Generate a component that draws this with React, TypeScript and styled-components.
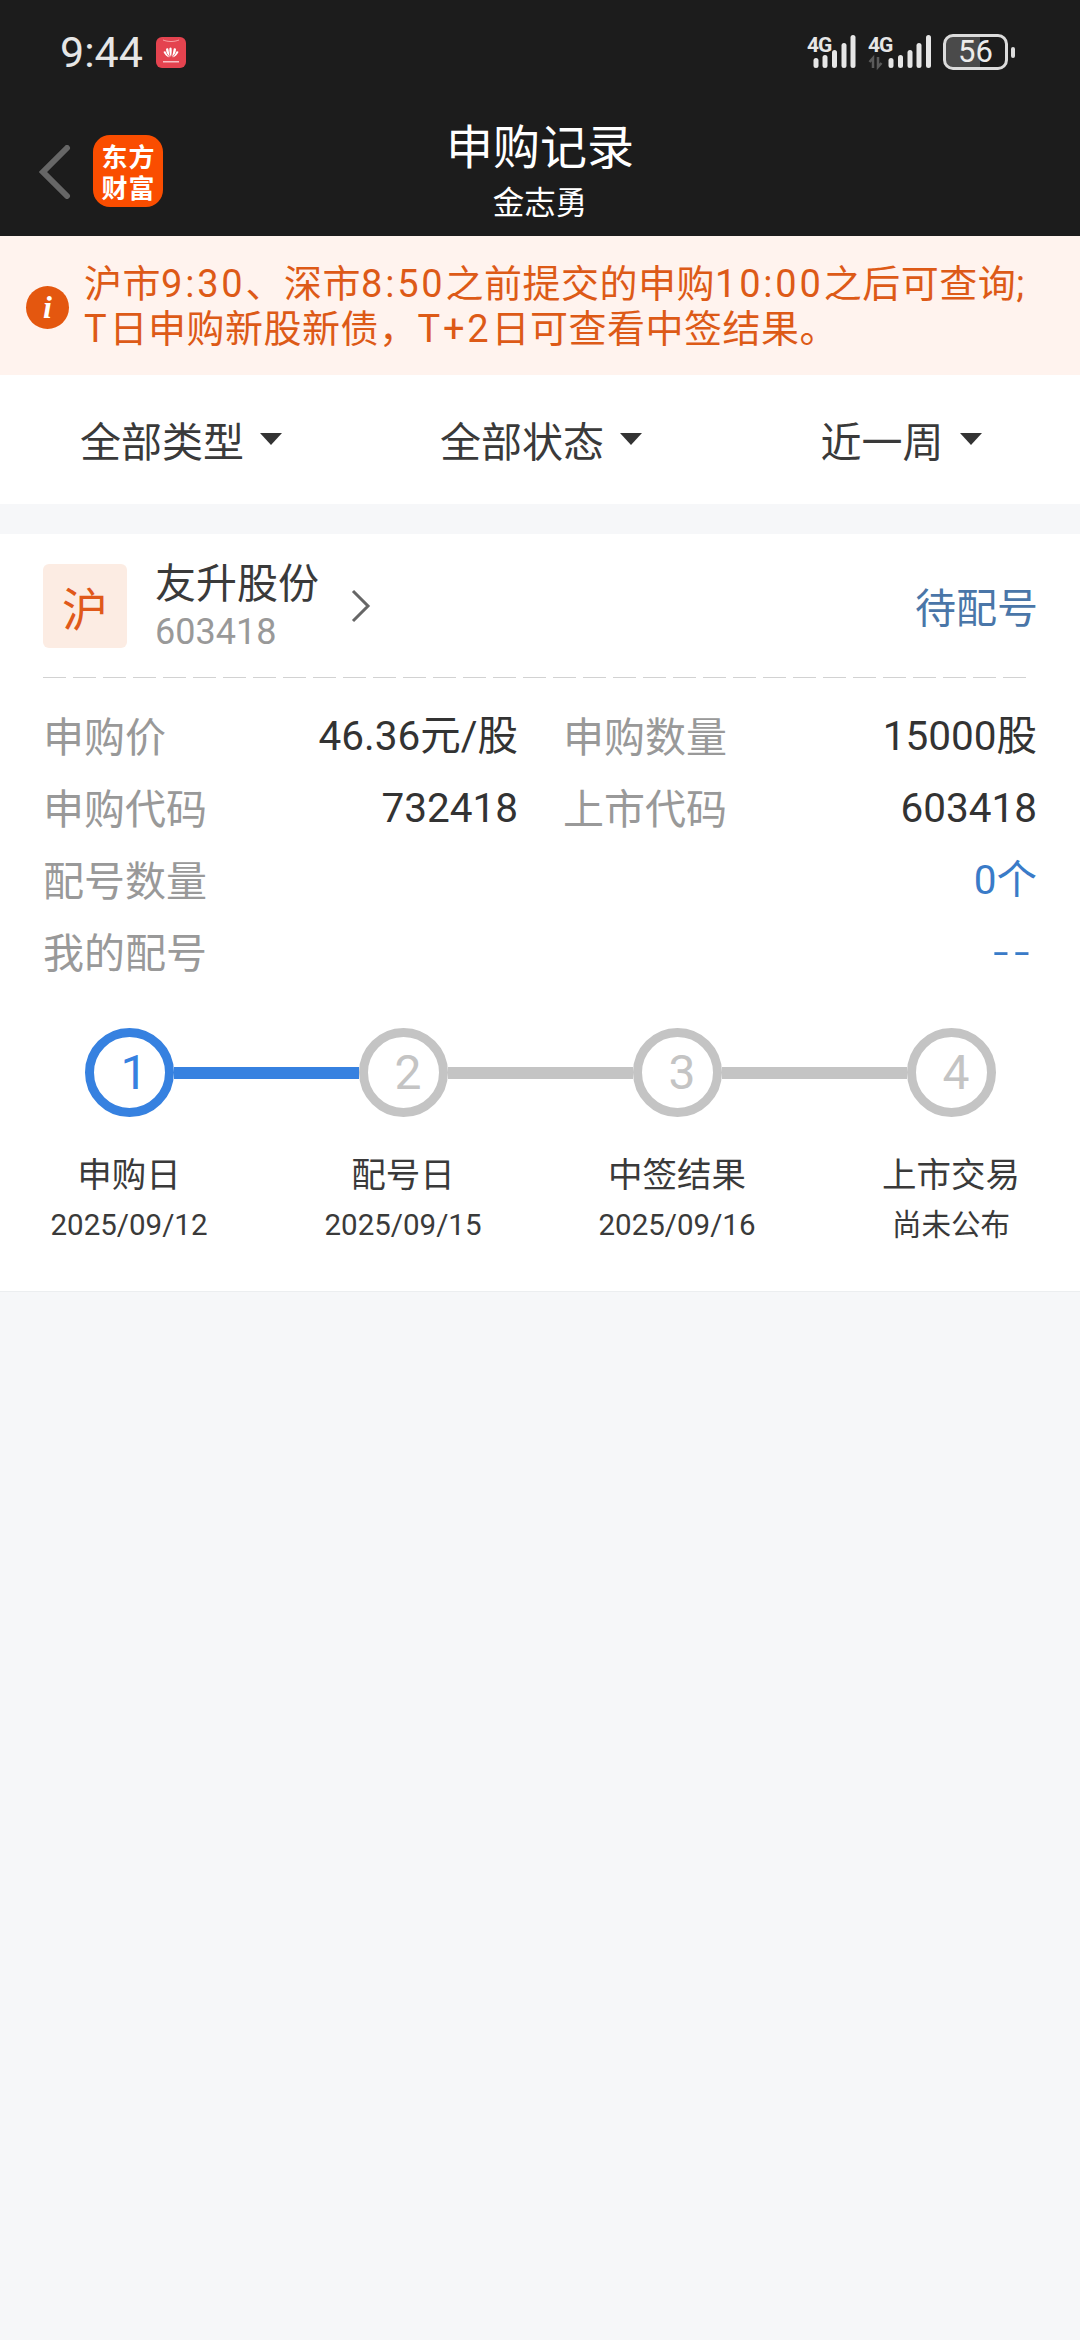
import React from "react";
import styled, { createGlobalStyle } from "styled-components";

const GlobalStyle = createGlobalStyle`
  html, body {
    margin: 0;
    padding: 0;
    background: #f6f7f9;
  }
  body {
    font-family: Roboto, "Noto Sans CJK SC", sans-serif;
  }
`;

const Page = styled.div`
  width: 1080px;
  height: 2340px;
  overflow: hidden;
  background: #f6f7f9;
`;

const Header = styled.header`
  height: 236px;
  background: #1c1c1c;
  display: flex;
  flex-direction: column;
`;

const StatusBar = styled.div`
  height: 100px;
  display: flex;
  align-items: center;
  justify-content: space-between;
  padding: 4px 65px 0 60px;
  box-sizing: border-box;
`;

const StatusLeft = styled.div`
  display: flex;
  align-items: center;
  gap: 13px;
`;

const Time = styled.span`
  color: #e6e6e6;
  font-size: 43px;
  font-family: Roboto, sans-serif;
  line-height: 50px;
`;

const NavBar = styled.div`
  position: relative;
  flex: 1;
  display: flex;
  align-items: center;
  padding: 8px 0 0 39px;
  gap: 22px;
`;

const Logo = styled.div`
  width: 70px;
  height: 72px;
  margin-bottom: 3px;
  background: #fa4d00;
  border-radius: 17px;
  display: grid;
  grid-template-columns: 1fr 1fr;
  place-items: center;
  padding: 5px 8px;
  box-sizing: border-box;
  color: #fff;
  font: 700 26px/31px "Noto Sans CJK SC", sans-serif;
`;

const TitleBlock = styled.div`
  position: absolute;
  left: 240px;
  right: 240px;
  top: 12px;
  text-align: center;
  color: #fff;
  font-family: "Noto Sans CJK SC", sans-serif;
`;

const Title = styled.div`
  font-size: 47px;
  line-height: 64px;
`;

const SubTitle = styled.div`
  font-size: 31.5px;
  line-height: 48px;
`;

const Notice = styled.div`
  height: 139px;
  background: #fff3ee;
  display: flex;
  align-items: center;
  gap: 15px;
  padding: 3px 0 0 26px;
  box-sizing: border-box;
`;

const InfoIcon = styled.div`
  width: 43px;
  height: 43px;
  flex: none;
  border-radius: 50%;
  background: #e4570f;
  color: #fff;
  display: flex;
  align-items: center;
  justify-content: center;
  font: italic 700 32px/43px "Liberation Serif", serif;
`;

const NoticeText = styled.div`
  color: #dd5a17;
  font: 38px/45px Roboto, "Noto Sans CJK SC", sans-serif;
  letter-spacing: 0.5px;
  white-space: nowrap;
`;

const Num = styled.span`
  letter-spacing: 2.8px;
`;

const Filters = styled.div`
  height: 129px;
  background: #fff;
  display: grid;
  grid-template-columns: repeat(3, 360px);
`;

const FilterItem = styled.div`
  display: flex;
  align-items: center;
  justify-content: center;
  gap: 16px;
  padding: 0 0 2px 2px;
  box-sizing: border-box;
  color: #3a3a3a;
  font: 41px/50px "Noto Sans CJK SC", sans-serif;
`;

const Caret = styled.i`
  width: 0;
  height: 0;
  border-left: 11px solid transparent;
  border-right: 11px solid transparent;
  border-top: 12px solid #333;
`;

const Card = styled.section`
  margin-top: 30px;
  height: 758px;
  background: #fff;
  padding: 0 43px 0 43px;
  box-sizing: border-box;
  border-bottom: 1px solid #eceef0;
`;

const StockRow = styled.div`
  height: 144px;
  display: flex;
  align-items: center;
  background-image: repeating-linear-gradient(90deg, #d2d2d2 0 23px, transparent 23px 30px);
  background-size: 986px 2px;
  background-position: 0 143px;
  background-repeat: no-repeat;
  box-sizing: border-box;
`;

const Badge = styled.div`
  width: 84px;
  height: 84px;
  border-radius: 6px;
  background: #fcece3;
  color: #e0591a;
  display: flex;
  align-items: center;
  justify-content: center;
  font: 46px/80px "Noto Sans CJK SC", sans-serif;
`;

const StockText = styled.div`
  margin-left: 28px;
  display: flex;
  flex-direction: column;
`;

const StockName = styled.div`
  color: #3a3a3a;
  font: 41px/52px "Noto Sans CJK SC", sans-serif;
`;

const StockCode = styled.div`
  color: #999;
  font: 36px/52px Roboto, sans-serif;
`;

const Chevron = styled.svg`
  margin-left: 32px;
`;

const Status = styled.div`
  margin: 0 -1px 3px auto;
  color: #4a76a8;
  font: 41px/50px "Noto Sans CJK SC", sans-serif;
`;

const Rows = styled.div`
  padding: 22px 0 0 0;
  display: grid;
  grid-template-columns: 475px 1fr;
  grid-auto-rows: 72px;
  column-gap: 45px;
`;

const Row = styled.div<{ $wide?: boolean }>`
  display: flex;
  align-items: center;
  justify-content: space-between;
  grid-column: ${(p) => (p.$wide ? "1 / -1" : "auto")};
`;

const Label = styled.span`
  color: #999;
  font: 41px/50px "Noto Sans CJK SC", sans-serif;
  margin-bottom: 4px;
`;

const Value = styled.span<{ $blue?: boolean }>`
  color: ${(p) => (p.$blue ? "#3a7bc8" : "#333")};
  font: 40.5px/50px Roboto, "Noto Sans CJK SC", sans-serif;
`;

const Dashes = styled(Value)`
  font-size: 56px;
  font-weight: 300;
  letter-spacing: 5px;
  margin-right: 2px;
`;

const Track = styled.div`
  margin-top: 40px;
  padding-left: 42px;
  display: flex;
  align-items: center;
`;

const Circle = styled.div<{ $on?: boolean }>`
  width: 89px;
  height: 89px;
  flex: none;
  border-radius: 50%;
  border: 9px solid ${(p) => (p.$on ? "#3681e0" : "#c4c4c4")};
  color: ${(p) => (p.$on ? "#3681e0" : "#c4c4c4")};
  box-sizing: border-box;
  display: flex;
  align-items: center;
  justify-content: center;
  font: 400 48px/71px Roboto, sans-serif;
  padding-left: 9px;
`;

const Line = styled.div<{ $on?: boolean }>`
  width: 185px;
  height: 12px;
  background: ${(p) => (p.$on ? "#3681e0" : "#c4c4c4")};
`;

const StepLabels = styled.div`
  margin-top: 30px;
  margin-left: 1px;
  display: grid;
  grid-template-columns: repeat(3, 274px) 170px;
`;

const Step = styled.div`
  width: 170px;
  display: flex;
  flex-direction: column;
  align-items: center;
  white-space: nowrap;
`;

const StepName = styled.div`
  color: #3a3a3a;
  font: 34.5px/50px "Noto Sans CJK SC", sans-serif;
`;

const StepDate = styled.div`
  color: #3a3a3a;
  font: 29.500px/56px Roboto, "Noto Sans CJK SC", sans-serif;
`;

const SignalIcon = ({ width, arrows }: { width: number; arrows?: boolean }) => {
  const xs = arrows ? [23, 32.5, 42, 51, 60.5] : [12, 21, 30.5, 40, 49];
  const hs = [10, 13, 18, 25, 33];
  return (
    <svg width={width} height={40} viewBox={`0 0 ${width} 40`}>
      <text x={arrows ? 0 : 3} y="20" fill="#e6e6e6" fontSize="21" fontWeight="700" letterSpacing="-1" fontFamily="Roboto, sans-serif">
        4G
      </text>
      {xs.map((x, i) => (
        <rect key={i} x={x - 2.5} y={36 - hs[i]} width={5} height={hs[i]} rx={2.5} fill="#e6e6e6" />
      ))}
      {arrows && (
        <path d="M5 36v-10l-3.500 4M10 25v10l3.500-4" stroke="#5a5a5a" strokeWidth="2.500" fill="none" />
      )}
    </svg>
  );
};

const Battery = styled.div`
  width: 65px;
  height: 36px;
  border: 3px solid #dcdcdc;
  border-radius: 10px;
  box-sizing: border-box;
  display: flex;
  align-items: center;
  justify-content: center;
  color: #ececec;
  font: 31px/30px Roboto, sans-serif;
  background: linear-gradient(90deg, #4a4a4a 0 34px, transparent 34px);
`;

const BatteryNub = styled.i`
  width: 4px;
  height: 11px;
  border-radius: 2px;
  background: #dcdcdc;
  margin-left: 3px;
`;

const StatusRight = styled.div`
  display: flex;
  align-items: center;
  gap: 12px;
`;

const BatteryWrap = styled.div`
  display: flex;
  align-items: center;
`;

const steps = [
  { name: "申购日", date: "2025/09/12" },
  { name: "配号日", date: "2025/09/15" },
  { name: "中签结果", date: "2025/09/16" },
  { name: "上市交易", date: "尚未公布" },
];

export default function App() {
  return (
    <Page>
      <GlobalStyle />
      <Header>
        <StatusBar>
          <StatusLeft>
            <Time>9:44</Time>
            <svg width="30" height="31" viewBox="0 0 30 31">
              <rect width="30" height="31" rx="6" fill="#e4434f" />
              <path d="M7 3c5 2 11 2 16 0" stroke="#f7a0a4" strokeWidth="1" fill="none" />
              <g fill="#fff">
                <path d="M15 20c-1.500-3-2-6-1.500-9 .5-.7 1.500-.7 2 0 .6 3 0 6-.5 9z" />
                <path d="M14 20c-2.500-2-4-5-4-8 .5-.8 1.500-.8 2.300-.3.6 3 1 6 1.700 8.300z" />
                <path d="M16 20c2.500-2 4-5 4-8-.5-.8-1.500-.8-2.300-.3-.6 3-1 6-1.700 8.300z" />
                <path d="M13.500 20.500c-2.500-.8-5-3-6-5.500.3-.7 1-1 1.800-.8 1.200 2.500 2.700 4.500 4.200 6.300z" />
                <path d="M16.500 20.500c2.500-.8 5-3 6-5.500-.3-.7-1-1-1.800-.8-1.200 2.500-2.700 4.500-4.200 6.300z" />
              </g>
              <rect x="7" y="24" width="16" height="1.500" fill="#f7c0c4" />
            </svg>
          </StatusLeft>
          <StatusRight>
            <SignalIcon width={52} />
            <SignalIcon width={63} arrows />
            <BatteryWrap>
              <Battery>56</Battery>
              <BatteryNub />
            </BatteryWrap>
          </StatusRight>
        </StatusBar>
        <NavBar>
          <svg width="32" height="54" viewBox="0 0 32 54">
            <path d="M28 3 4 27l24 24" stroke="#666" strokeWidth="6" strokeLinecap="round" fill="none" />
          </svg>
          <Logo>
            <span>东</span>
            <span>方</span>
            <span>财</span>
            <span>富</span>
          </Logo>
          <TitleBlock>
            <Title>申购记录</Title>
            <SubTitle>金志勇</SubTitle>
          </TitleBlock>
        </NavBar>
      </Header>

      <Notice>
        <InfoIcon>i</InfoIcon>
        <NoticeText>
          沪市<Num>9:30</Num>、深市<Num>8:50</Num>之前提交的申购<Num>10:00</Num>之后可查询;
          <br />
          <Num>T</Num>日申购新股新债，<Num>T+2</Num>日可查看中签结果。
        </NoticeText>
      </Notice>

      <Filters>
        {["全部类型", "全部状态", "近一周"].map((f) => (
          <FilterItem key={f}>
            {f}
            <Caret />
          </FilterItem>
        ))}
      </Filters>

      <Card>
        <StockRow>
          <Badge>沪</Badge>
          <StockText>
            <StockName>友升股份</StockName>
            <StockCode>603418</StockCode>
          </StockText>
          <Chevron width="20" height="34" viewBox="0 0 20 34">
            <path d="M2 2l15 15L2 32" stroke="#666" strokeWidth="3" fill="none" />
          </Chevron>
          <Status>待配号</Status>
        </StockRow>

        <Rows>
          <Row>
            <Label>申购价</Label>
            <Value>46.36元/股</Value>
          </Row>
          <Row>
            <Label>申购数量</Label>
            <Value>15000股</Value>
          </Row>
          <Row>
            <Label>申购代码</Label>
            <Value>732418</Value>
          </Row>
          <Row>
            <Label>上市代码</Label>
            <Value>603418</Value>
          </Row>
          <Row $wide>
            <Label>配号数量</Label>
            <Value $blue>0个</Value>
          </Row>
          <Row $wide>
            <Label>我的配号</Label>
            <Dashes $blue>--</Dashes>
          </Row>
        </Rows>

        <Track>
          <Circle $on>1</Circle>
          <Line $on />
          <Circle>2</Circle>
          <Line />
          <Circle>3</Circle>
          <Line />
          <Circle>4</Circle>
        </Track>

        <StepLabels>
          {steps.map((s) => (
            <Step key={s.name}>
              <StepName>{s.name}</StepName>
              <StepDate>{s.date}</StepDate>
            </Step>
          ))}
        </StepLabels>
      </Card>
    </Page>
  );
}
